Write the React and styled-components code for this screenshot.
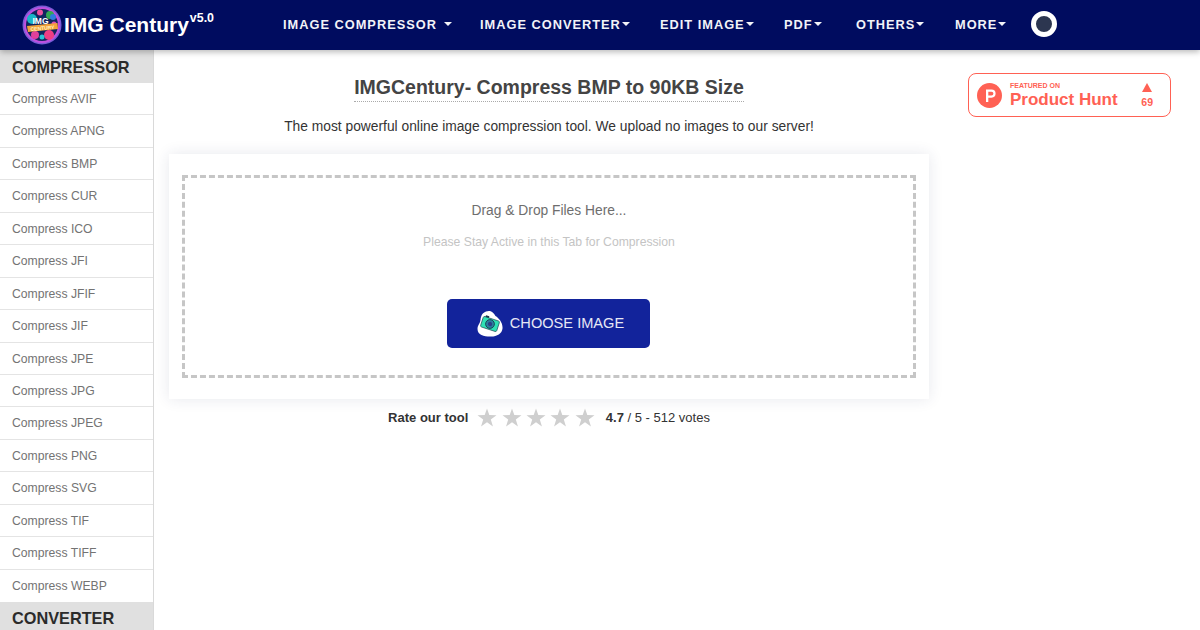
import React from 'react';
import styled, { createGlobalStyle } from 'styled-components';

const compressors = ['AVIF', 'APNG', 'BMP', 'CUR', 'ICO', 'JFI', 'JFIF', 'JIF', 'JPE', 'JPG', 'JPEG', 'PNG', 'SVG', 'TIF', 'TIFF', 'WEBP'];
const navItems = [
  { label: 'IMAGE COMPRESSOR', spaced: true, width: 197 },
  { label: 'IMAGE CONVERTER', width: 180 },
  { label: 'EDIT IMAGE', width: 124 },
  { label: 'PDF', width: 72 },
  { label: 'OTHERS', width: 99 },
  { label: 'MORE', width: 76 },
];

const GlobalStyle = createGlobalStyle`
  html, body {
    margin: 0;
    height: 630px;
    overflow: hidden;
    background: #fff;
    font-family: "Liberation Sans", Arial, sans-serif;
  }
  * { box-sizing: border-box; }
`;

const Page = styled.div`
  width: 1200px;
  height: 630px;
  overflow: hidden;
  display: flex;
  flex-direction: column;
`;

const Header = styled.header`
  height: 50px;
  flex: none;
  background: #000c5f;
  box-shadow: 0 2px 6px rgba(0, 0, 0, 0.28);
  display: flex;
  align-items: center;
  padding-left: 22px;
  position: relative;
  z-index: 2;
`;

const Brand = styled.div`
  width: 261px;
  display: flex;
  align-items: center;
  color: #fff;
  font-size: 21px;
  font-weight: 700;
`;

const Version = styled.sup`
  font-size: 12.4px;
  font-weight: 700;
  align-self: flex-start;
  margin: 5px 0 0 1px;
  line-height: 16px;
`;

const BrandName = styled.span`
  margin-left: 2px;
`;

const Nav = styled.nav`
  display: flex;
  align-items: center;
  margin-top: -2px;
`;

const NavItem = styled.a`
  width: ${(p) => p.$width}px;
  display: flex;
  align-items: center;
  color: #f2f3f8;
  font-size: 12.8px;
  font-weight: 700;
  letter-spacing: 1px;
  white-space: nowrap;
`;

const Caret = styled.span`
  width: 0;
  height: 0;
  margin-left: ${(p) => (p.$spaced ? 7 : 1)}px;
  border-left: 4px solid transparent;
  border-right: 4px solid transparent;
  border-top: 4px solid #f2f3f8;
`;

const ThemeDot = styled.span`
  width: 26px;
  height: 26px;
  border-radius: 50%;
  background: #2c3650;
  border: 5px solid #fff;
`;

const Body = styled.div`
  flex: 1;
  min-height: 0;
  display: flex;
`;

const Sidebar = styled.aside`
  width: 154px;
  flex: none;
  border-right: 1px solid #d9d9d9;
  overflow: hidden;
`;

const SideTitle = styled.div`
  height: 33px;
  background: #e0e0e0;
  color: #2b2b2b;
  font-size: 16.3px;
  font-weight: 700;
  line-height: 34px;
  padding-left: 12px;
  &:last-child { line-height: 32px; }
`;

const SideLink = styled.a`
  display: block;
  height: 32.45px;
  padding-left: 12px;
  line-height: 32px;
  color: #737373;
  font-size: 12.2px;
  border-bottom: 1px solid #e4e4e4;
  &:last-of-type {
    height: 32px;
    border-bottom: 0;
  }
`;

const Main = styled.main`
  width: 790px;
  flex: none;
  padding: 24px 15px 0;
  display: flex;
  flex-direction: column;
  align-items: center;
`;

const Title = styled.h1`
  margin: 0;
  color: #444;
  font-size: 19.5px;
  line-height: 27px;
  font-weight: 700;
  border-bottom: 1px dotted #aaa;
`;

const Lead = styled.p`
  margin: 16px 0 0;
  color: #333;
  font-size: 13.8px;
  line-height: 18px;
`;

const Card = styled.section`
  width: 760px;
  height: 245px;
  margin-top: 18px;
  padding: 21px 13px;
  background: #fff;
  box-shadow: 0 0 14px rgba(40, 50, 90, 0.11);
`;

const DropZone = styled.div`
  height: 203px;
  border: 3px dashed #c6c6c6;
  display: flex;
  flex-direction: column;
  align-items: center;
  padding-top: 24px;
`;

const DropText = styled.div`
  color: #6e6e6e;
  font-size: 13.8px;
  line-height: 17px;
`;

const Hint = styled.div`
  margin-top: 15px;
  color: #c4c4c4;
  font-size: 12.2px;
  line-height: 16px;
`;

const ChooseButton = styled.button`
  width: 203px;
  height: 49px;
  margin: 49px 0 0 -1px;
  border: 0;
  border-radius: 5px;
  background: #12239b;
  color: #e6e8f5;
  font: 14.6px "Liberation Sans", Arial, sans-serif;
  display: flex;
  align-items: center;
  justify-content: center;
  gap: 7px;
  padding: 0 0 1px 4px;
`;

const Rating = styled.div`
  margin-top: 5px;
  display: flex;
  align-items: center;
  height: 26px;
  color: #333;
  font-size: 13px;
`;

const RateLabel = styled.b`
  margin-right: 9px;
`;

const Stars = styled.div`
  display: flex;
  gap: 4.4px;
  margin-right: 11px;
`;

const Aside = styled.aside`
  flex: 1;
  padding: 23px 0 0 24px;
`;

const HuntBadge = styled.a`
  width: 203px;
  height: 44px;
  display: flex;
  align-items: center;
  padding: 0 17px 0 8px;
  border: 1px solid #ff6154;
  border-radius: 8px;
  color: #ff6154;
`;

const HuntText = styled.div`
  margin-left: 8px;
  flex: 1;
  font-weight: 700;
`;

const HuntSmall = styled.div`
  font-size: 7px;
  line-height: 8px;
`;

const HuntName = styled.div`
  font-size: 17px;
  line-height: 19px;
`;

const HuntVotes = styled.div`
  display: flex;
  flex-direction: column;
  align-items: center;
  gap: 4px;
  font-size: 10.5px;
  font-weight: 700;
`;

const HuntArrow = styled.span`
  width: 0;
  height: 0;
  border-left: 5px solid transparent;
  border-right: 5px solid transparent;
  border-bottom: 9px solid #ff6154;
`;

const Logo = () => (
  <svg width="40" height="40" viewBox="0 0 40 40" aria-hidden="true">
    <circle cx="20" cy="20" r="19.5" fill="#7d5bd6" />
    <circle cx="20" cy="20" r="18" fill="#c04fe0" />
    <circle cx="20" cy="20" r="16" fill="#12265e" />
    <circle cx="10" cy="14" r="5" fill="#19b6c9" />
    <circle cx="28" cy="10" r="4" fill="#34a853" />
    <circle cx="31" cy="12" r="3" fill="#2f7ce0" />
    <circle cx="18" cy="7.500" r="3" fill="#ee4f9f" />
    <circle cx="13" cy="30" r="4" fill="#e0409b" />
    <circle cx="27" cy="30" r="5" fill="#ef3e84" />
    <circle cx="20" cy="32" r="2.500" fill="#29c6d8" />
    <circle cx="32" cy="19" r="2.500" fill="#e04fb0" />
    <path d="M5 21 L35.500 18 L36 24 L6 27 Z" fill="#f2a33a" />
    <text x="18.500" y="18.500" textAnchor="middle" fill="#fff" fontSize="8.500" fontWeight="700" fontFamily="Liberation Sans">IMG</text>
    <text x="20.500" y="25" textAnchor="middle" fill="#fff3c2" fontSize="5" fontWeight="700" fontFamily="Liberation Sans" transform="rotate(-5 20 23)">CENTURY</text>
  </svg>
);

const CameraIcon = () => (
  <svg width="26" height="27" viewBox="0 0 26 27" aria-hidden="true">
    <path d="M9 1.500 C14 -0.500 17 3 18.500 6 C22 8 26 13 25.500 18.500 C25 24 19 27 13 26.500 C7 26.500 0.500 25 0.500 19 C0.500 15 3 14 3.500 10 C4 6 5 3 9 1.500 Z" fill="#fff" />
    <g transform="rotate(18 13 14)">
      <rect x="4.500" y="8.500" width="17" height="11" rx="1.500" fill="#2fe0b4" stroke="#16384a" strokeWidth="0.6" />
      <rect x="6.500" y="6.800" width="3.500" height="1.800" fill="#16384a" />
      <circle cx="13" cy="14" r="4.400" fill="#2a7f9e" stroke="#16384a" strokeWidth="0.8" />
      <circle cx="13" cy="14" r="2.200" fill="#2d3f88" />
    </g>
  </svg>
);

const Star = () => (
  <svg width="20" height="19" viewBox="0 0 24 23" aria-hidden="true">
    <path d="M12 0.500 L14.800 8.600 L23.500 8.800 L16.600 14 L19.200 22.500 L12 17.400 L4.800 22.500 L7.400 14 L0.500 8.800 L9.200 8.600 Z" fill="#cfcfcf" />
  </svg>
);

const HuntLogo = () => (
  <svg width="25" height="25" viewBox="0 0 25 25" aria-hidden="true">
    <circle cx="12.500" cy="12.500" r="12.500" fill="#ff6154" />
    <path d="M9 6.500 H14.500 A4 4 0 0 1 14.500 14.700 H11.300 V19 H9 Z M11.300 8.700 V12.500 H14.500 A1.900 1.900 0 0 0 14.500 8.700 Z" fill="#fff" fillRule="evenodd" />
  </svg>
);

const App = () => {
  return (
    <Page>
      <GlobalStyle />
      <Header>
        <Brand>
          <Logo />
          <BrandName>IMG Century</BrandName>
          <Version>v5.0</Version>
        </Brand>
        <Nav>
          {navItems.map((item) => (
            <NavItem key={item.label} $width={item.width}>
              {item.label}
              <Caret $spaced={item.spaced} />
            </NavItem>
          ))}
          <ThemeDot />
        </Nav>
      </Header>
      <Body>
        <Sidebar>
          <SideTitle>COMPRESSOR</SideTitle>
          {compressors.map((name) => (
            <SideLink key={name}>Compress {name}</SideLink>
          ))}
          <SideTitle>CONVERTER</SideTitle>
        </Sidebar>
        <Main>
          <Title>IMGCentury- Compress BMP to 90KB Size</Title>
          <Lead>The most powerful online image compression tool. We upload no images to our server!</Lead>
          <Card>
            <DropZone>
              <DropText>Drag &amp; Drop Files Here...</DropText>
              <Hint>Please Stay Active in this Tab for Compression</Hint>
              <ChooseButton>
                <CameraIcon />
                CHOOSE IMAGE
              </ChooseButton>
            </DropZone>
          </Card>
          <Rating>
            <RateLabel>Rate our tool</RateLabel>
            <Stars>
              {[1, 2, 3, 4, 5].map((n) => (
                <Star key={n} />
              ))}
            </Stars>
            <b>4.7</b>&nbsp;/ 5 - 512 votes
          </Rating>
        </Main>
        <Aside>
          <HuntBadge>
            <HuntLogo />
            <HuntText>
              <HuntSmall>FEATURED ON</HuntSmall>
              <HuntName>Product Hunt</HuntName>
            </HuntText>
            <HuntVotes>
              <HuntArrow />
              69
            </HuntVotes>
          </HuntBadge>
        </Aside>
      </Body>
    </Page>
  );
};

export default App;
